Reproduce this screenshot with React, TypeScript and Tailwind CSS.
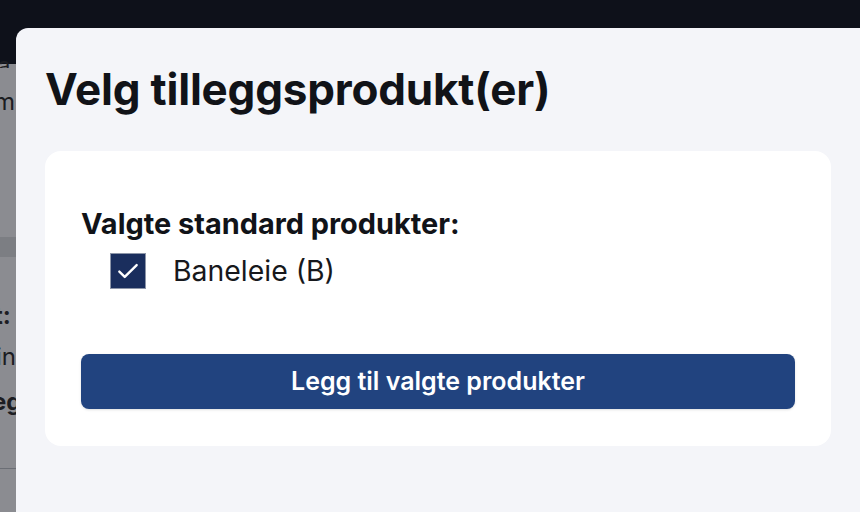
import React from "react";

export default function App() {
  return (
    <div className="relative h-[512px] w-[860px] overflow-hidden bg-white" style={{ fontFamily: "Inter, 'Liberation Sans', sans-serif" }}>
      {/* background page behind the overlay */}
      <div className="flex h-full w-full flex-col">
        <div className="h-[64px] shrink-0 bg-[#0e111a]"></div>
        <div className="flex flex-1 flex-col bg-[#8b8c91] text-[#1c1d22]">
          <div className="-ml-[2px] -mt-[10px] h-[14px] overflow-hidden text-[22px] leading-none">a</div>
          <div className="-ml-[6px] mt-[20px] text-[24px] leading-[28px]">mp</div>
          <div className="mt-[121px] h-[20px] w-full bg-[#7c7e83]"></div>
          <div className="-ml-[6px] mt-[45px] text-[24px] font-bold leading-[28px]">t:</div>
          <div className="-ml-[4px] mt-[13px] text-[24px] leading-[28px]">in</div>
          <div className="-ml-[8px] mt-[17px] text-[24px] font-bold leading-[28px]">eg</div>
          <div className="mt-[52px] h-px w-full bg-[#6b6e75]"></div>
        </div>
      </div>
      {/* modal */}
      <div className="absolute left-[16px] top-[28px] h-[520px] w-[860px] rounded-tl-[12px] bg-[#f4f5f9] pl-[29px] pt-[35px]">
        <h1 className="text-[44px] font-bold leading-[53px] tracking-[-0.2px] text-[#111318]">Velg tilleggsprodukt(er)</h1>
        <div className="mt-[35px] w-[786px] rounded-[16px] bg-white px-[36px] pb-[37px] pt-[55px]">
          <div className="text-[28.9px] font-bold leading-[36px] text-[#111318]">Valgte standard produkter:</div>
          <label className="ml-[29px] mt-[11px] flex items-center gap-[27px]">
            <span className="flex h-[36px] w-[36px] shrink-0 items-center justify-center border border-[#8c95a8] bg-[#1a2e5d]">
              <svg width="26" height="26" viewBox="0 0 24 24" fill="none" stroke="white" strokeWidth="2.2" strokeLinecap="round" strokeLinejoin="round">
                <path d="M4 12.5l5 5L20 6.5" />
              </svg>
            </span>
            <span className="text-[28.4px] leading-[34px] text-[#17181c]">Baneleie (B)</span>
          </label>
          <button className="mt-[65px] flex h-[55px] w-full items-center justify-center rounded-[8px] bg-[#21437f] text-[25px] font-semibold text-white shadow-sm">
            Legg til valgte produkter
          </button>
        </div>
      </div>
    </div>
  );
}
